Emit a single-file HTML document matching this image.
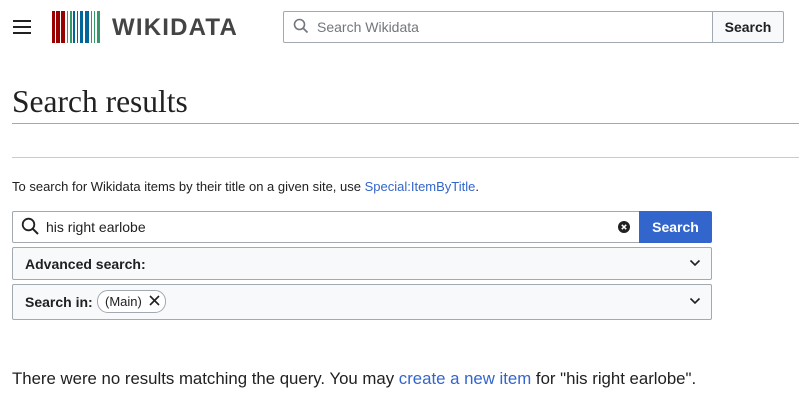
<!DOCTYPE html>
<html><head><style>
body{margin:0;width:799px;height:400px;background:#fff;font-family:"Liberation Sans",sans-serif;color:#202122;position:relative;overflow:hidden}
.abs{position:absolute}
.ham div{position:absolute;left:13px;width:18px;height:2px;background:#202122}
.logo span{position:absolute;top:11px;height:32px}
.r{background:#990000}.g{background:#339966}.b{background:#006699}
</style></head><body>
<div class="ham"><div style="top:20px"></div><div style="top:26px"></div><div style="top:32px"></div></div>
<div class="logo">
<span class="r" style="left:52px;width:3px"></span>
<span class="r" style="left:56px;width:4px"></span>
<span class="r" style="left:61px;width:4px"></span>
<span class="g" style="left:67px;width:1px"></span>
<span class="g" style="left:70px;width:2px"></span>
<span class="b" style="left:73px;width:2px"></span>
<span class="b" style="left:77px;width:1px"></span>
<span class="b" style="left:80px;width:3px"></span>
<span class="b" style="left:85px;width:4px"></span>
<span class="g" style="left:91px;width:1px"></span>
<span class="g" style="left:94px;width:1px"></span>
<span class="g" style="left:97px;width:3px"></span>
</div>
<div class="abs" style="left:112px;top:14px;font-size:24px;font-weight:bold;color:#444;letter-spacing:1.2px">WIKIDATA</div>
<div class="abs" style="left:283px;top:11px;width:428px;height:30px;border:1px solid #a2a9b1;border-radius:2px 0 0 2px"></div>
<svg class="abs" style="left:293px;top:18px" width="16" height="16" viewBox="0 0 16 16"><circle cx="6.5" cy="6.5" r="5" fill="none" stroke="#72777d" stroke-width="1.6"/><path d="M10 10l4.5 4.5" stroke="#72777d" stroke-width="1.8"/></svg>
<div class="abs" style="left:317px;top:19px;font-size:14px;color:#72777d">Search Wikidata</div>
<div class="abs" style="left:712px;top:11px;width:70px;height:30px;border:1px solid #a2a9b1;background:#f8f9fa;border-radius:0 2px 2px 0;font-size:14px;font-weight:bold;text-align:center;line-height:30px">Search</div>
<div class="abs" style="left:12px;top:84px;font-family:'Liberation Serif',serif;font-size:31.5px">Search results</div>
<div class="abs" style="left:12px;top:123px;width:787px;height:1px;background:#a2a9b1"></div>
<div class="abs" style="left:12px;top:157px;width:787px;height:1px;background:#c8ccd1"></div>
<div class="abs" style="left:12px;top:179px;font-size:13px">To search for Wikidata items by their title on a given site, use <span style="color:#3366cc">Special:ItemByTitle</span>.</div>
<div class="abs" style="left:12px;top:211px;width:626px;height:30px;border:1px solid #a2a9b1;border-radius:2px 0 0 2px"></div>
<svg class="abs" style="left:21px;top:217px" width="19" height="19" viewBox="0 0 19 19"><circle cx="7.5" cy="7.5" r="5.8" fill="none" stroke="#202122" stroke-width="1.8"/><path d="M11.7 11.7l5.3 5.3" stroke="#202122" stroke-width="2"/></svg>
<div class="abs" style="left:46px;top:219px;font-size:14px">his right earlobe</div>
<svg class="abs" style="left:618px;top:221px" width="12" height="12" viewBox="0 0 12 12"><circle cx="6" cy="6" r="6" fill="#202122"/><path d="M3.8 3.8l4.4 4.4M8.2 3.8l-4.4 4.4" stroke="#fff" stroke-width="1.5"/></svg>
<div class="abs" style="left:639px;top:211px;width:73px;height:32px;background:#3366cc;color:#fff;border-radius:0 2px 2px 0;font-size:14px;font-weight:bold;text-align:center;line-height:32px">Search</div>
<div class="abs" style="left:12px;top:247px;width:698px;height:31px;border:1px solid #a2a9b1;background:#f8f9fa;border-radius:2px"></div>
<div class="abs" style="left:25px;top:256px;font-size:14px;font-weight:bold">Advanced search:</div>
<svg class="abs" style="left:689px;top:259px" width="12" height="8" viewBox="0 0 12 8"><path d="M1.5 1.5l4.5 4.5 4.5-4.5" fill="none" stroke="#202122" stroke-width="1.6"/></svg>
<div class="abs" style="left:12px;top:284px;width:698px;height:34px;border:1px solid #a2a9b1;background:#f8f9fa;border-radius:2px"></div>
<div class="abs" style="left:25px;top:294px;font-size:14px;font-weight:bold">Search in:</div>
<div class="abs" style="left:97px;top:290px;width:67px;height:21px;border:1px solid #a2a9b1;border-radius:11px;background:#fff"></div>
<div class="abs" style="left:105px;top:294px;font-size:13px">(Main)</div>
<svg class="abs" style="left:149px;top:295px" width="11" height="11" viewBox="0 0 11 11"><path d="M1 1l9 9M10 1l-9 9" stroke="#202122" stroke-width="1.6"/></svg>
<svg class="abs" style="left:689px;top:297px" width="12" height="8" viewBox="0 0 12 8"><path d="M1.5 1.5l4.5 4.5 4.5-4.5" fill="none" stroke="#202122" stroke-width="1.6"/></svg>
<div class="abs" style="left:12px;top:369px;font-size:16.8px">There were no results matching the query. You may <span style="color:#3366cc">create a new item</span> for "his right earlobe".</div>
</body></html>
